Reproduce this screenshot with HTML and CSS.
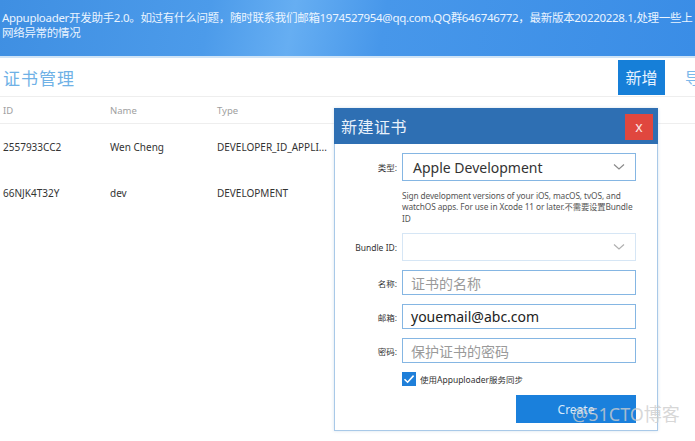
FILE: index.html
```html
<!DOCTYPE html>
<html>
<head>
<meta charset="utf-8">
<link rel="stylesheet" href="styles.css">
</head>
<body>
<div class="app">
  <header class="banner">Appuploader开发助手2.0。如过有什么问题，随时联系我们邮箱1974527954@qq.com,QQ群646746772，最新版本20220228.1,处理一些上网络异常的情况</header>
  <div class="titlebar">
    <div class="title">证书管理</div>
    <div class="actions">
      <button class="btn-add">新增</button>
      <span class="more">导</span>
    </div>
  </div>
  <div class="table">
    <div class="thead">
      <span>ID</span><span>Name</span><span>Type</span>
    </div>
    <div class="row">
      <span>2557933CC2</span><span>Wen Cheng</span><span>DEVELOPER_ID_APPLI...</span>
    </div>
    <div class="row">
      <span>66NJK4T32Y</span><span>dev</span><span>DEVELOPMENT</span>
    </div>
  </div>

  <div class="dialog">
    <div class="dlg-head">
      <span class="dlg-title">新建证书</span>
      <span class="dlg-close">x</span>
    </div>
    <div class="dlg-body">
      <div class="frow">
        <label>类型:</label>
        <div class="field select active">
          <span>Apple Development</span>
          <svg class="chev" width="12" height="8" viewBox="0 0 12 8"><path d="M1 1.5 L6 6 L11 1.5" fill="none" stroke="#8a8a8a" stroke-width="1.2"/></svg>
        </div>
      </div>
      <div class="frow desc-row">
        <label></label>
        <div class="desc">Sign development versions of your iOS, macOS, tvOS, and watchOS apps. For use in Xcode 11 or later.不需要设置Bundle ID</div>
      </div>
      <div class="frow">
        <label>Bundle ID:</label>
        <div class="field select dim">
          <span></span>
          <svg class="chev" width="12" height="8" viewBox="0 0 12 8"><path d="M1 1.5 L6 6 L11 1.5" fill="none" stroke="#b0b0b0" stroke-width="1.2"/></svg>
        </div>
      </div>
      <div class="frow">
        <label>名称:</label>
        <div class="field input"><span class="ph">证书的名称</span></div>
      </div>
      <div class="frow">
        <label>邮箱:</label>
        <div class="field input"><span class="val">youemail@abc.com</span></div>
      </div>
      <div class="frow">
        <label>密码:</label>
        <div class="field input"><span class="ph">保护证书的密码</span></div>
      </div>
      <div class="frow check-row">
        <label></label>
        <div class="check">
          <span class="box"><svg width="14" height="14" viewBox="0 0 14 14"><path d="M2.5 7.2 L5.6 10.2 L11.6 3.6" fill="none" stroke="#fff" stroke-width="1.6"/></svg></span>
          <span class="check-label">使用Appuploader服务同步</span>
        </div>
      </div>
      <div class="frow btn-row">
        <label></label>
        <div class="btn-wrap"><button class="btn-create">Create</button></div>
      </div>
    </div>
  </div>
  <div class="watermark">@51CTO博客</div>
</div>
</body>
</html>
```

FILE: styles.css
```css
* { box-sizing: border-box; }
html, body { margin: 0; padding: 0; }
body {
  width: 695px;
  height: 441px;
  overflow: hidden;
  background: #fff;
  font-family: "Noto Sans", "Noto Sans CJK SC", sans-serif;
  color: #333;
}
.app { position: relative; width: 695px; height: 441px; }

.banner {
  height: 58px;
  padding: 10px 2px 0 2px;
  font-size: 11.5px;
  line-height: 15px;
  color: #eaf4ff;
  background: linear-gradient(100deg, #3f8fe2 0%, #4c9bea 30%, #66aef2 42%, #4797ea 55%, #3a8de6 100%);
  border-bottom: 2px solid #cfe4f7;
  letter-spacing: -0.3px;
}

.titlebar {
  height: 39px;
  display: flex;
  align-items: center;
  justify-content: space-between;
  border-bottom: 1px solid #eeeeee;
}
.title {
  padding-left: 3px;
  font-size: 17px;
  color: #6fb1e6;
  font-family: "Noto Sans CJK SC", sans-serif;
  letter-spacing: 1px;
}
.actions { display: flex; align-items: center; gap: 20px; }
.btn-add {
  width: 47px;
  height: 35px;
  border: 0;
  margin: 0;
  background: #167fd8;
  color: #e6f2ff;
  font-size: 16px;
  font-family: "Noto Sans CJK SC", sans-serif;
  padding: 0;
}
.more {
  width: 10px;
  overflow: hidden;
  color: #7bb8ea;
  font-size: 16px;
  font-family: "Noto Sans CJK SC", sans-serif;
  white-space: nowrap;
}

.table { font-size: 10px; }
.thead, .row {
  display: grid;
  grid-template-columns: 107px 107px 1fr;
  padding-left: 3px;
  align-items: center;
}
.thead {
  height: 27px;
  color: #a0a0a0;
  border-bottom: 1px solid #eeeeee;
  font-size: 9.5px;
}
.row { height: 46px; color: #333; }

.dialog {
  position: absolute;
  left: 334px;
  top: 108px;
  width: 324px;
  height: 323px;
  background: #fff;
  border: 1px solid #a9c9e8;
  border-top: 0;
  box-shadow: 0 0 3px rgba(120,160,200,0.3);
}
.dlg-head {
  height: 36px;
  margin: 0 -1px;
  background: #2e6fb3;
  display: flex;
  align-items: center;
  justify-content: space-between;
  padding: 0 5px 0 7px;
}
.dlg-title {
  color: #e8f1fb;
  font-size: 16px;
  font-family: "Noto Sans CJK SC", sans-serif;
  letter-spacing: 0.5px;
}
.dlg-close {
  width: 28px;
  height: 26px;
  background: #e0473e;
  color: #fbe3e1;
  font-size: 14px;
  display: flex;
  align-items: center;
  justify-content: center;
  margin-top: 1px;
}
.dlg-body {
  display: flex;
  flex-direction: column;
  gap: 9px;
  padding-top: 9px;
}
.frow {
  display: grid;
  grid-template-columns: 62px 234px;
  column-gap: 5px;
  align-items: center;
}
.frow label {
  text-align: right;
  font-size: 8.5px;
  color: #333;
  font-family: "Noto Sans", "Noto Sans CJK SC", sans-serif;
}
.field {
  display: flex;
  align-items: center;
  border: 1.5px solid #85b6e3;
  padding: 0 10px;
  font-size: 14px;
}
.select { height: 28px; justify-content: space-between; }
.select.active span { color: #333; }
.select.dim { border: 1.5px solid #d6e6f5; }
.chev { flex: none; margin-right: 0; }
.input { height: 25px; padding: 0 8px; }
.ph { color: #9a9a9a; font-family: "Noto Sans CJK SC", sans-serif; }
.val { color: #222; }
.desc {
  font-size: 8.3px;
  line-height: 11.3px;
  height: 34px;
  color: #555;
  letter-spacing: -0.1px;
}
.check-row { height: 14px; }
.check { display: flex; align-items: center; gap: 4px; }
.box {
  width: 14px;
  height: 14px;
  background: #1f7fd9;
  display: flex;
}
.check-label { font-size: 8.5px; color: #333; }
.btn-wrap { display: flex; justify-content: flex-end; }
.btn-create {
  width: 120px;
  height: 28px;
  border: 0;
  margin: 0;
  background: #1a80dc;
  color: #d6e9fb;
  font-size: 12px;
  font-family: "Noto Sans", sans-serif;
}

.watermark {
  position: absolute;
  left: 572px;
  top: 400px;
  font-size: 18px;
  color: rgba(205, 205, 205, 0.8);
  font-family: "Noto Sans", "Noto Sans CJK SC", sans-serif;
  letter-spacing: 0px;
  white-space: nowrap;
}
```
